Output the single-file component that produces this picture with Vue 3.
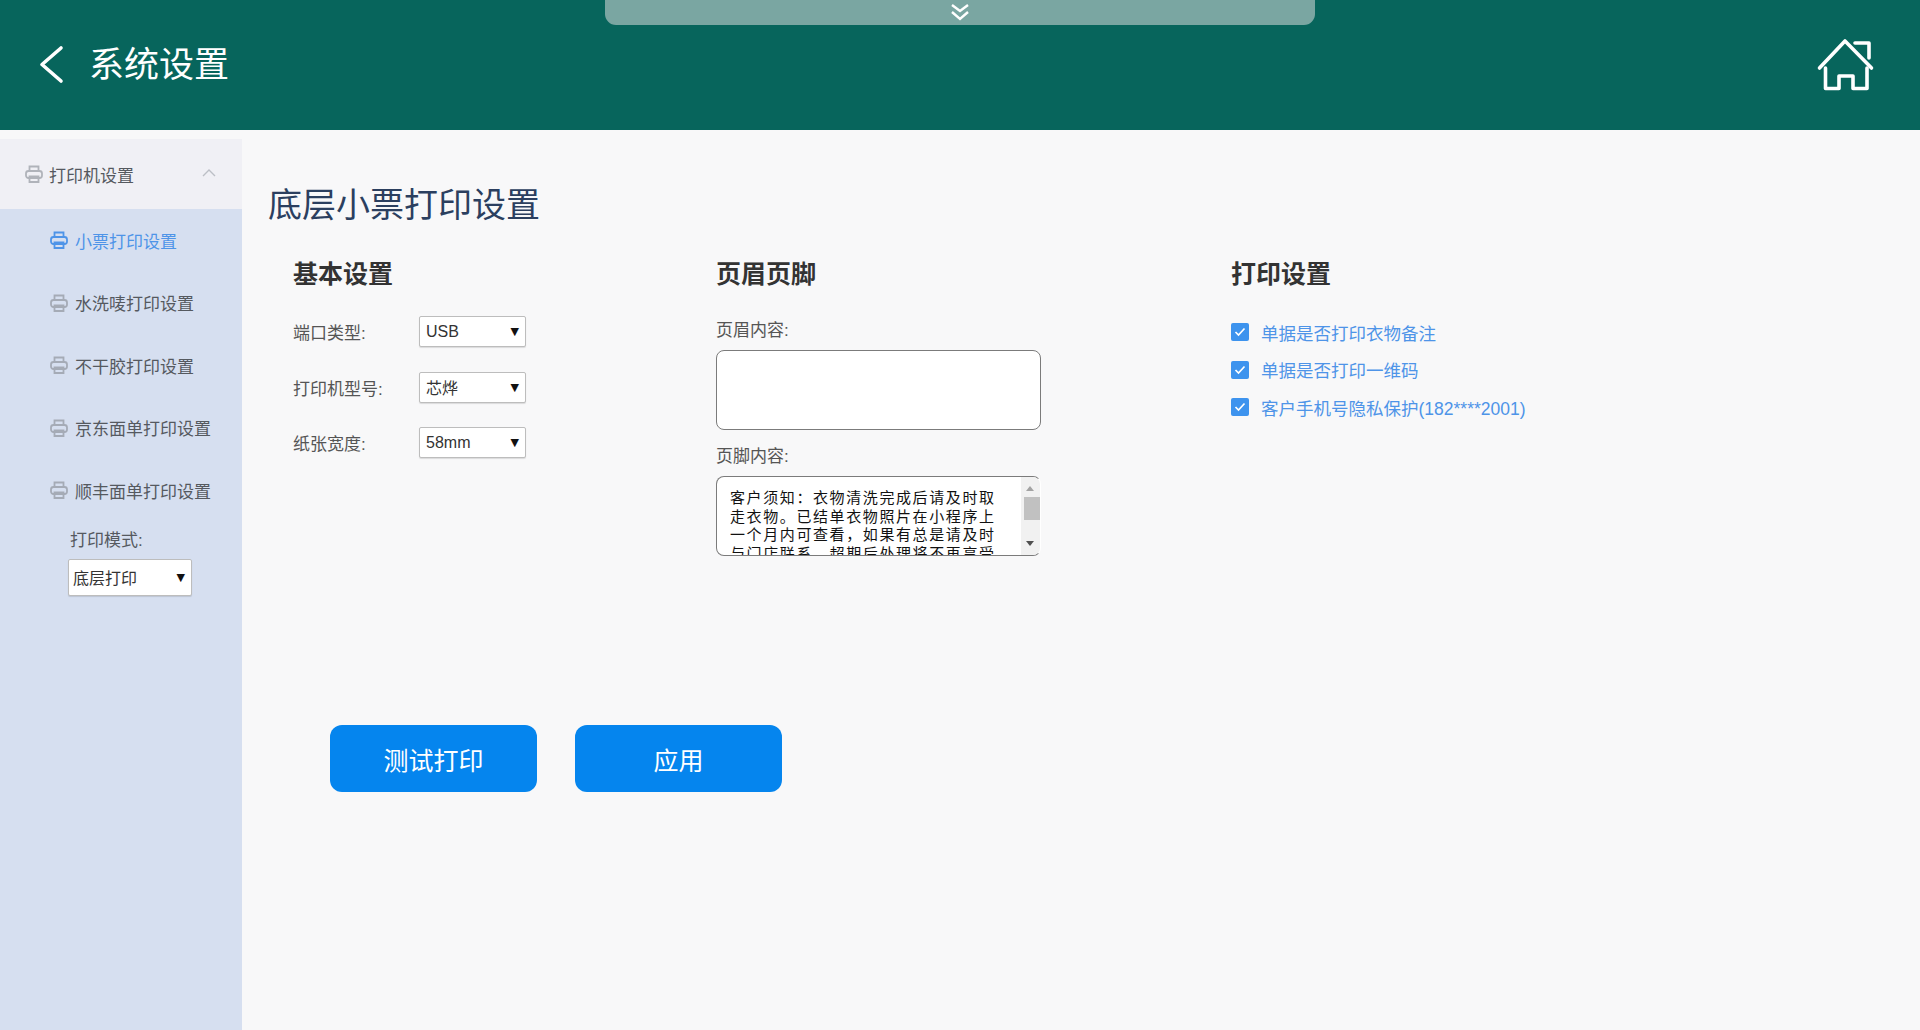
<script setup>
const navItems = [
  { label: '小票打印设置', active: true },
  { label: '水洗唛打印设置' },
  { label: '不干胶打印设置' },
  { label: '京东面单打印设置' },
  { label: '顺丰面单打印设置' }
]
const baseRows = [
  { label: '端口类型:', value: 'USB' },
  { label: '打印机型号:', value: '芯烨' },
  { label: '纸张宽度:', value: '58mm' }
]
const checks = ['单据是否打印衣物备注', '单据是否打印一维码', '客户手机号隐私保护(182****2001)']
const footer = '客户须知：衣物清洗完成后请及时取走衣物。已结单衣物照片在小程序上一个月内可查看，如果有总是请及时与门店联系，超期后处理将不再享受售后服务。'
</script>

<template>
  <div class="page">
    <header class="topbar">
      <div class="pull">
        <svg class="pull-icon" width="20" height="18" viewBox="0 0 20 18" fill="none" stroke="#fff" stroke-width="2.4">
          <path d="M2 2l8 6 8-6" />
          <path d="M2 9l8 7 8-7" />
        </svg>
      </div>
      <div class="back-title">
        <svg width="28" height="40" viewBox="0 0 28 40" fill="none" stroke="#fff" stroke-width="3.6" stroke-linecap="round" stroke-linejoin="round">
          <path d="M23 3L4 19.5 23 36" />
        </svg>
        <span class="page-title">系统设置</span>
      </div>
      <svg class="home" width="70" height="70" viewBox="0 0 70 70" fill="none" stroke="#fff" stroke-width="3.6" stroke-linecap="round" stroke-linejoin="round">
        <path d="M9.5 38L35 11 61.500 38" />
        <path d="M45 13H59V28" />
        <path d="M15.500 38V58.500H29V46H43V58.500H57V38" />
      </svg>
    </header>

    <div class="body">
      <aside class="sidebar">
        <div class="side-head">
          <svg class="printer" width="18" height="18" viewBox="0 0 18 18" fill="none" stroke="currentColor" stroke-width="1.8">
            <path d="M4.500 6V1.500h9V6" />
            <rect x="1" y="6" width="16" height="7" rx="2.500" />
            <path d="M4.500 11.500h9v5.500h-9z" />
          </svg>
          <span class="side-head-text">打印机设置</span>
          <svg class="caret" width="14" height="8" viewBox="0 0 14 8" fill="none" stroke="#bcbfc6" stroke-width="1.400">
            <path d="M1 7l6-6 6 6" />
          </svg>
        </div>
        <nav class="nav">
          <a v-for="item in navItems" :key="item.label" class="nav-item" :class="{ active: item.active }">
            <svg class="printer" width="18" height="18" viewBox="0 0 18 18" fill="none" stroke="currentColor" stroke-width="1.800">
              <path d="M4.500 6V1.500h9V6" />
              <rect x="1" y="6" width="16" height="7" rx="2.500" />
              <path d="M4.500 11.500h9v5.500h-9z" />
            </svg>
            <span>{{ item.label }}</span>
          </a>
        </nav>
        <div class="mode">
          <div class="mode-label">打印模式:</div>
          <div class="select mode-select"><span>底层打印</span><i class="arrow">▼</i></div>
        </div>
      </aside>

      <main class="content">
        <h1 class="main-title">底层小票打印设置</h1>
        <div class="columns">
          <section>
            <h2>基本设置</h2>
            <div class="rows">
              <div v-for="row in baseRows" :key="row.label" class="row">
                <label>{{ row.label }}</label>
                <div class="select"><span>{{ row.value }}</span><i class="arrow">▼</i></div>
              </div>
            </div>
          </section>
          <section>
            <h2>页眉页脚</h2>
            <div class="field-label first">页眉内容:</div>
            <textarea class="area" readonly></textarea>
            <div class="field-label second">页脚内容:</div>
            <div class="area footer-area">
              <div class="footer-text">{{ footer }}</div>
              <div class="scrollbar">
                <i class="sb-up"></i>
                <i class="sb-thumb"></i>
                <i class="sb-down"></i>
              </div>
            </div>
          </section>
          <section>
            <h2>打印设置</h2>
            <div class="checks">
              <div v-for="c in checks" :key="c" class="check">
                <span class="box">
                  <svg width="12" height="10" viewBox="0 0 12 10" fill="none" stroke="#fff" stroke-width="1.700"><path d="M1.500 5l3 3 6-6.500" /></svg>
                </span>
                <span>{{ c }}</span>
              </div>
            </div>
          </section>
        </div>
        <div class="actions">
          <button class="btn">测试打印</button>
          <button class="btn">应用</button>
        </div>
      </main>
    </div>
  </div>
</template>

<style>
html, body { margin: 0; background: #f8f8f9; overflow: hidden; }
</style>

<style scoped>
.page {
  width: 1920px;
  height: 1030px;
  display: flex;
  flex-direction: column;
  overflow: hidden;
  background: #f8f8f9;
  font-family: "Liberation Sans", "Noto Sans CJK SC", sans-serif;
}
.topbar {
  height: 130px;
  flex: none;
  background: #07655c;
  display: flex;
  align-items: center;
  justify-content: space-between;
  padding: 0 40px 0 38px;
  position: relative;
}
.pull {
  position: absolute;
  left: 605px;
  top: 0;
  width: 710px;
  height: 25px;
  background: #7aa6a2;
  border-radius: 0 0 11px 11px;
  display: flex;
  justify-content: center;
}
.pull-icon { margin-top: 3px; }
.back-title { display: flex; align-items: center; gap: 23px; }
.page-title { color: #fff; font-size: 35px; line-height: 48px; }
.home { display: block; margin-top: 0; }

.body { flex: 1; display: flex; min-height: 0; }
.sidebar {
  width: 242px;
  margin-top: 9px;
  background: #d6dff0;
  flex: none;
}
.side-head {
  height: 70px;
  background: #f0f0f5;
  display: flex;
  align-items: center;
  padding-left: 25px;
  color: #b0b3ba;
  position: relative;
}
.side-head-text { margin-left: 6px; color: #55595f; font-size: 17px; }
.caret { position: absolute; left: 202px; top: 30px; }
.printer { flex: none; }
.nav { padding-top: 0; }
.nav-item {
  height: 62.5px;
  display: flex;
  align-items: center;
  padding-left: 50px;
  gap: 7px;
  color: #a5abb6;
}
.nav-item span { color: #55595f; font-size: 17px; }
.nav-item.active { color: #4e94e8; }
.nav-item.active span { color: #4e94e8; }
.mode { padding: 0 0 0 68px; margin-top: 7px; }
.mode-label { font-size: 17px; line-height: 24px; color: #55595f; padding-left: 2px; }
.select {
  box-sizing: border-box;
  width: 107px;
  height: 31px;
  background: #fff;
  border: 1px solid #bdbdbd;
  border-radius: 2px;
  box-shadow: 0 1px 1px rgba(0,0,0,.12);
  display: flex;
  align-items: center;
  justify-content: space-between;
  padding: 0 6px 0 6px;
  font-size: 16px;
  color: #333;
}
.mode-select { width: 124px; height: 37px; margin-top: 6px; padding-left: 4px; }
.arrow { font-style: normal; font-size: 11px; color: #111; font-family: "DejaVu Sans", sans-serif; }

.content { flex: 1; padding: 52px 0 0 26px; min-width: 0; }
.main-title {
  margin: 0;
  font-size: 34px;
  line-height: 46px;
  font-weight: 400;
  color: #2b3f5f;
}
.columns {
  display: grid;
  grid-template-columns: 423px 515px 1fr;
  padding-left: 25px;
  margin-top: 29px;
}
h2 {
  margin: 0;
  font-size: 25px;
  line-height: 34px;
  font-weight: 700;
  color: #333;
}
.rows { margin-top: 25px; display: grid; grid-auto-rows: 31px; row-gap: 24.500px; }
.row { display: flex; align-items: center; }
.row label { width: 126px; font-size: 17px; color: #555; }
.field-label { font-size: 17px; line-height: 24px; color: #555; }
.field-label.first { margin-top: 28px; }
.field-label.second { margin-top: 15px; }
.area {
  display: block;
  box-sizing: border-box;
  width: 325px;
  height: 80px;
  margin: 7px 0 0;
  padding: 0;
  background: #fff;
  border: 1.500px solid #7b7b7b;
  border-radius: 8px;
  resize: none;
  outline: none;
}
.footer-area { position: relative; overflow: hidden; border-right-color: transparent; }
.footer-text {
  width: 272px;
  margin: 12px 0 0 13px;
  font-size: 15px;
  line-height: 18.700px;
  letter-spacing: 1.600px;
  color: #111;
}
.scrollbar {
  position: absolute;
  right: 0;
  top: 0;
  bottom: 0;
  width: 19px;
  background: #f1f1f1;
}
.scrollbar i { position: absolute; display: block; }
.sb-up {
  left: 5px; top: 9px;
  border-left: 4px solid transparent;
  border-right: 4px solid transparent;
  border-bottom: 5px solid #a3a3a3;
}
.sb-thumb { left: 3px; top: 20px; width: 16px; height: 23px; background: #c1c1c1; }
.sb-down {
  left: 5px; bottom: 9px;
  border-left: 4px solid transparent;
  border-right: 4px solid transparent;
  border-top: 5px solid #505050;
}
.checks { margin-top: 29px; display: grid; grid-auto-rows: 24px; row-gap: 13.500px; }
.check { display: flex; align-items: center; gap: 12px; font-size: 17.500px; color: #4e94e8; }
.box {
  width: 18px;
  height: 18px;
  flex: none;
  background: #3d93ee;
  border-radius: 2px;
  display: flex;
  align-items: center;
  justify-content: center;
}
.actions { display: flex; gap: 38px; padding-left: 62px; margin-top: 169px; }
.btn {
  width: 207px;
  height: 67px;
  border: 0;
  border-radius: 12px;
  background: #0585ee;
  color: #fff;
  font-family: inherit;
  font-size: 25px;
}
</style>
